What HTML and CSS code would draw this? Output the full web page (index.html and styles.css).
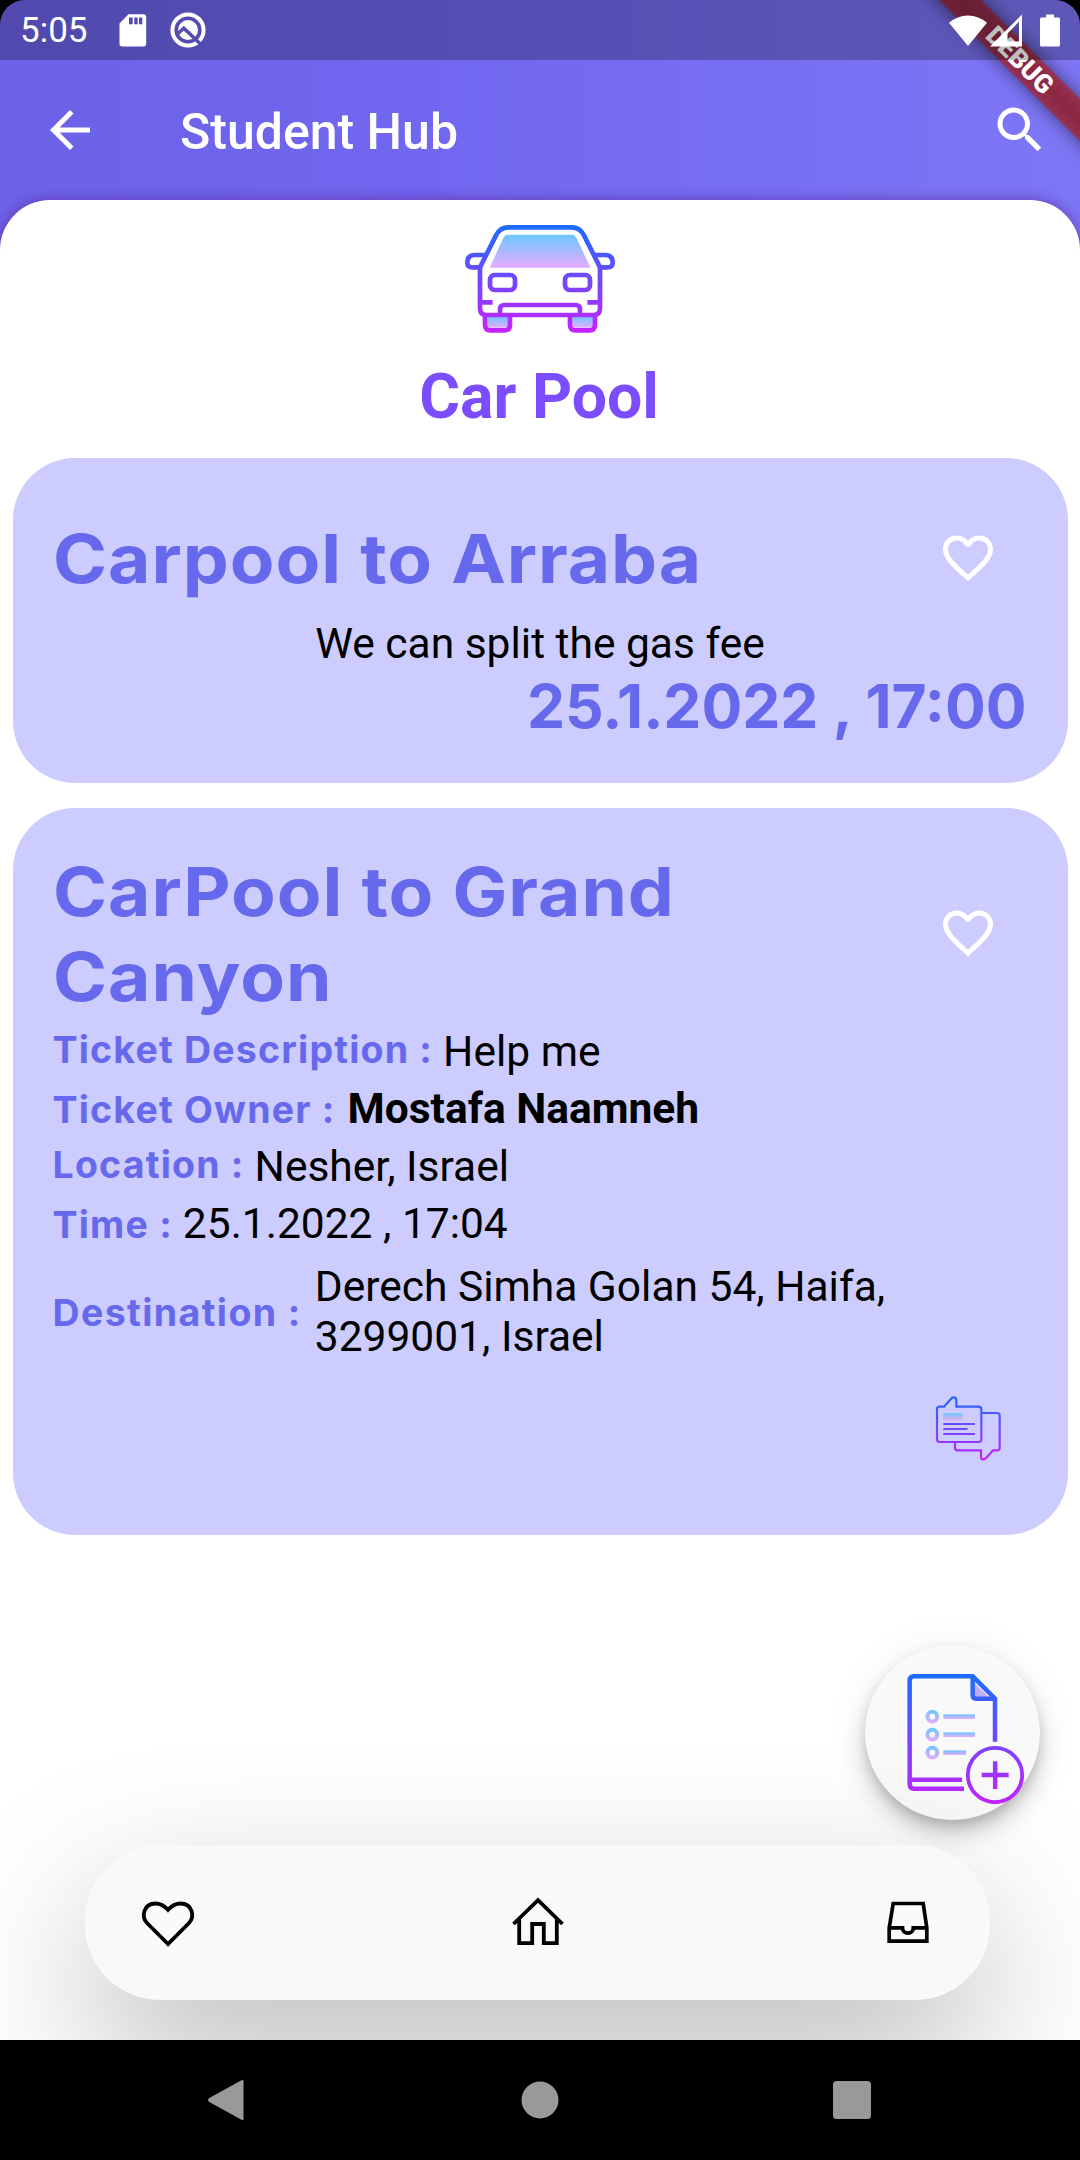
FILE: index.html
```html
<!DOCTYPE html>
<html lang="en">
<head>
<meta charset="utf-8">
<title>Student Hub</title>
<link rel="stylesheet" href="styles.css">
</head>
<body>
<div class="screen">
  <header class="header">
    <div class="appbar">
      <svg class="icon-60" viewBox="0 0 24 24" fill="#fff"><path d="M20 11H7.83l5.59-5.59L12 4l-8 8 8 8 1.41-1.41L7.83 13H20v-2z"/></svg>
      <h1 class="appbar-title">Student Hub</h1>
      <svg class="icon-60" viewBox="0 0 24 24" fill="#fff"><path d="M15.5 14h-.79l-.28-.27C15.41 12.59 16 11.11 16 9.5 16 5.91 13.09 3 9.5 3S3 5.91 3 9.5 5.91 16 9.5 16c1.61 0 3.09-.59 4.23-1.57l.27.28v.79l5 4.99L20.49 19l-4.99-5zm-6 0C7.01 14 5 11.99 5 9.5S7.01 5 9.5 5 14 7.01 14 9.5 11.99 14 9.5 14z"/></svg>
    </div>
    <div class="banner"><span class="banner-text">DEBUG</span></div>
    <div class="status">
      <span class="clock">5:05</span>
      <svg class="sd" width="28" height="33" viewBox="0 0 28 33"><path fill="#fff" fill-rule="evenodd" d="M9.5 .3H24.500a2.700 2.700 0 0 1 2.700 2.700V29.800a2.700 2.700 0 0 1-2.700 2.700H3.200A2.700 2.700 0 0 1 .5 29.800V9.500ZM10 3.400V10.300H13.700V3.400ZM15.300 3.400V10.300H18.700V3.400ZM20 3.400V10.300H23.300V3.400Z"/></svg>
      <svg class="ring" width="36" height="36" viewBox="0 0 36 36"><circle cx="18" cy="18" r="15.600" fill="none" stroke="#fff" stroke-width="4"/><circle cx="18" cy="18" r="10" fill="#fff"/><path d="M7.500 22 13.800 16.200 30.500 32" fill="none" stroke="#544db0" stroke-width="3.400"/></svg>
      <span class="spacer"></span>
      <svg width="38" height="33" viewBox="0 0 38 33"><path fill="#fff" d="M0 8.700A29 29 0 0 1 38 8.700L19 32Z"/></svg>
      <svg class="signal" width="32" height="33" viewBox="0 0 32 33"><path fill="#fff" fill-rule="evenodd" d="M0 32.500 32 .5V32.500ZM17.500 19.500V27.500H29V7.600Z"/></svg>
      <svg class="battery" width="20" height="33" viewBox="0 0 20 33"><path fill="#fff" d="M6 .5H14V3.500H18.500Q20 3.500 20 5V31Q20 32.500 18.500 32.500H1.500Q0 32.500 0 31V5Q0 3.500 1.500 3.500H6Z"/></svg>
    </div>
  </header>

  <main class="sheet">
    <svg class="car" viewBox="255 15 450 450" fill="none">
      <defs>
        <linearGradient id="carLine" gradientUnits="userSpaceOnUse" x1="0" y1="72" x2="0" y2="400"><stop offset="0" stop-color="#1a6dff"/><stop offset="1" stop-color="#c822ff"/></linearGradient>
        <linearGradient id="soft" x1="0" y1="0" x2="0" y2="1"><stop offset="0" stop-color="#6dc7ff"/><stop offset="1" stop-color="#e6abff"/></linearGradient>
      </defs>
      <path fill="url(#soft)" d="M382 104H577Q585 104 588 112L632 203H329L371 112Q375 104 382 104Z"/>
      <path fill="url(#soft)" d="M322 350H384V383H322ZM577 350H639V383H577Z"/>
      <g stroke="url(#carLine)" stroke-width="14">
        <path d="M318 165H285Q262 165 262 188Q262 202 278 202H300V325Q300 345 318 345H642Q660 345 660 325V202H682Q698 202 698 188Q698 165 675 165H642"/>
        <path d="M300 202 348 106Q360 82 385 82H575Q600 82 612 106L660 202"/>
        <rect x="330" y="225" width="75" height="45" rx="14"/>
        <rect x="555" y="225" width="75" height="45" rx="14"/>
        <path d="M303 307.200 338 307M622 307 657 307.200"/>
        <path d="M360 345V328Q360 315 373 315H587Q600 315 600 328V345"/>
        <path d="M315 345V374Q315 391 332 391H373Q390 391 390 374V345M570 345V374Q570 391 587 391H628Q645 391 645 374V345"/>
      </g>
    </svg>
    <h2 class="page-title">Car Pool</h2>

    <article class="card card-short">
      <div class="card-head">
        <h3 class="card-title">Carpool to Arraba</h3>
        <svg class="icon-60" viewBox="0 0 24 24" fill="#fff"><path d="M16.5 3c-1.740 0-3.410.810-4.500 2.090C10.910 3.810 9.240 3 7.500 3 4.420 3 2 5.420 2 8.500c0 3.780 3.400 6.860 8.550 11.540L12 21.350l1.450-1.320C18.600 15.360 22 12.280 22 8.500 22 5.420 19.580 3 16.500 3zm-4.400 15.550l-.1.100-.1-.1C7.140 14.240 4 11.390 4 8.500 4 6.500 5.500 5 7.500 5c1.540 0 3.040.990 3.570 2.360h1.870C13.460 5.990 14.960 5 16.500 5c2 0 3.500 1.500 3.500 3.500 0 2.890-3.140 5.740-7.900 10.050z"/></svg>
      </div>
      <p class="note">We can split the gas fee</p>
      <p class="when">25.1.2022 , 17:00</p>
    </article>

    <article class="card card-full">
      <div class="card-head">
        <h3 class="card-title">CarPool to Grand Canyon</h3>
        <svg class="icon-60" viewBox="0 0 24 24" fill="#fff"><path d="M16.5 3c-1.740 0-3.410.810-4.500 2.090C10.910 3.810 9.240 3 7.500 3 4.420 3 2 5.420 2 8.500c0 3.780 3.400 6.860 8.550 11.540L12 21.350l1.450-1.320C18.600 15.360 22 12.280 22 8.500 22 5.420 19.580 3 16.500 3zm-4.400 15.550l-.1.100-.1-.1C7.140 14.240 4 11.390 4 8.500 4 6.500 5.500 5 7.500 5c1.540 0 3.040.990 3.570 2.360h1.870C13.460 5.990 14.960 5 16.500 5c2 0 3.500 1.500 3.500 3.500 0 2.890-3.140 5.740-7.900 10.050z"/></svg>
      </div>
      <dl class="details">
        <div class="row row-top"><dt>Ticket Description :</dt><dd>Help me</dd></div>
        <div class="row"><dt>Ticket Owner :</dt><dd class="strong">Mostafa Naamneh</dd></div>
        <div class="row row-top"><dt>Location :</dt><dd>Nesher, Israel</dd></div>
        <div class="row"><dt>Time :</dt><dd>25.1.2022 , 17:04</dd></div>
        <div class="row row-tall"><dt>Destination :</dt><dd>Derech Simha Golan 54, Haifa, 3299001, Israel</dd></div>
      </dl>
      <svg class="chat" viewBox="222 165 201 201" fill="none">
        <defs><linearGradient id="chatLine" gradientUnits="userSpaceOnUse" x1="0" y1="168" x2="0" y2="362"><stop offset="0" stop-color="#1a6dff"/><stop offset="1" stop-color="#c822ff"/></linearGradient></defs>
        <rect x="247" y="219" width="57" height="23" fill="url(#soft)"/>
        <g stroke="url(#chatLine)" stroke-width="6.500">
          <path d="M249 200H236Q228 200 228 208V298Q228 306 236 306H353Q361 306 361 298V208Q361 200 353 200H286V180Q286 172 278 172Q273 172 269 178Z"/>
          <path d="M361 219H408Q416 219 416 227V323Q416 331 408 331H396L376 353Q371 358 366 358Q360 358 360 350V331H290Q282 331 282 323V306"/>
          <path d="M247 252H342M247 267H319.500M247 282H342"/>
        </g>
      </svg>
    </article>

    <button class="fab" aria-label="New ticket">
      <svg width="134" height="134" viewBox="162 150 402 402" fill="none">
        <defs><linearGradient id="docLine" gradientUnits="userSpaceOnUse" x1="0" y1="162" x2="0" y2="552"><stop offset="0" stop-color="#1a6dff"/><stop offset="1" stop-color="#c822ff"/></linearGradient>
        <linearGradient id="dots" gradientUnits="userSpaceOnUse" x1="0" y1="270" x2="0" y2="310"><stop offset="0" stop-color="#6dc7ff"/><stop offset="1" stop-color="#e6abff"/></linearGradient></defs>
        <path fill="#c3aefa" d="M400 185 450 235H400Z"/>
        <g stroke="url(#docLine)" stroke-width="13.500">
          <path d="M465 365V236L398 169H222Q209 169 209 182V492Q209 506 222 506H372M209 479H366"/>
          <path d="M398 170V225Q398 236 409 236H465"/>
          <circle cx="465" cy="465" r="81.500" stroke-width="11.500"/>
          <path d="M425 465H506M465.500 424V507"/>
        </g>
        <g><circle cx="277" cy="290" r="14.500" stroke="url(#dots)" stroke-width="12"/><rect x="310" y="283" width="95" height="14" fill="url(#soft)"/></g>
        <g transform="translate(0 54)"><circle cx="277" cy="290" r="14.500" stroke="url(#dots)" stroke-width="12"/><rect x="310" y="283" width="95" height="14" fill="url(#soft)"/></g>
        <g transform="translate(0 108)"><circle cx="277" cy="290" r="14.500" stroke="url(#dots)" stroke-width="12"/><rect x="310" y="283" width="68" height="14" fill="url(#soft)"/></g>
      </svg>
    </button>

    <nav class="tabs">
      <svg class="icon-60" viewBox="0 0 60 60" fill="none" stroke="#000" stroke-width="3.800"><path d="M30 51 9 30C3 23.500 5.500 10.500 17.500 10.500 23.500 10.500 27.500 14 30 16.800 32.500 14 36.500 10.500 42.500 10.500 54.500 10.500 57 23.500 51 30Z"/></svg>
      <svg class="icon-60" viewBox="0 0 60 60" fill="none" stroke="#000" stroke-width="3.800"><path d="M5.500 31 30 7.200 54.500 31M11.200 26V50.200H24.200V31H35.800V50.200H48.800V26"/></svg>
      <svg class="icon-60" viewBox="0 0 60 60" fill="none" stroke="#000" stroke-width="3.700"><path d="M15.200 10.500H45.200L48.800 34.800V48.200H11.200V34.800ZM11.200 34.800H24.500A5.400 5.400 0 0 0 35.300 34.800H48.800"/></svg>
    </nav>
  </main>

  <footer class="system-nav">
    <svg width="40" height="42" viewBox="0 0 40 42" fill="#999"><path d="M34.500 1.300Q36.500 .200 36.500 2.500V39.500Q36.500 41.800 34.500 40.700L1.800 22.800Q0 21 1.800 19.200Z"/></svg>
    <svg width="38" height="38" viewBox="0 0 38 38" fill="#999"><circle cx="19" cy="19" r="18.500"/></svg>
    <svg width="38" height="38" viewBox="0 0 38 38" fill="#999"><rect width="38" height="38" rx="3.500"/></svg>
  </footer>
</div>
</body>
</html>
```
FILE: styles.css
```css
* { box-sizing: border-box; margin: 0; padding: 0; }

body {
  width: 1080px;
  height: 2160px;
  background: #000;
  font-family: Roboto, sans-serif;
  color: #000;
}

svg { display: block; flex: none; }

.screen {
  width: 1080px;
  height: 2160px;
  display: flex;
  flex-direction: column;
  overflow: hidden;
}

.icon-60 { width: 60px; height: 60px; }

/* header */
.header {
  position: relative;
  height: 260px;
  margin-bottom: -60px;
  padding-top: 60px;
  border-radius: 25px 25px 0 0;
  overflow: hidden;
  background: linear-gradient(90deg, #6c62e8 0%, #7167f0 40%, #7d76f5 100%);
}

.appbar {
  height: 140px;
  display: flex;
  align-items: center;
  padding: 0 30px 0 40px;
}

.appbar-title {
  flex: 1;
  padding: 3px 0 0 80px;
  font-size: 50px;
  font-weight: 500;
  line-height: 60px;
  color: #fff;
}

.status {
  position: absolute;
  inset: 0 0 auto 0;
  height: 60px;
  display: flex;
  align-items: center;
  padding: 0 20px;
  background: rgba(0, 0, 0, .25);
}

.clock { padding-top: 2px; font-size: 35px; line-height: 60px; color: #fff; }
.sd { margin-left: 31px; }
.ring { margin-left: 23px; }
.spacer { flex: 1; }
.signal { margin-left: 3px; }
.battery { margin-left: 18px; }

.banner {
  position: absolute;
  top: 45px;
  left: 880px;
  width: 280px;
  height: 30px;
  transform: rotate(45deg);
  text-align: center;
}

.banner::before,
.banner::after {
  content: "";
  position: absolute;
  inset: 0;
}

.banner::before { background: rgba(0, 0, 0, .5); filter: blur(9px); }
.banner::after { background: rgba(183, 28, 28, .63); }

.banner-text {
  position: relative;
  z-index: 1;
  display: block;
  font-size: 26px;
  font-weight: 900;
  line-height: 30px;
  color: #fff;
}

/* content sheet */
.sheet {
  position: relative;
  flex: 1;
  display: flex;
  flex-direction: column;
  padding: 5px 12.5px 40px 12.5px;
  border-radius: 50px 50px 0 0;
  background: #fff;
  box-shadow: 0 0 13px rgba(94, 40, 160, .75);
  clip-path: inset(-30px 0 0 0);
}

.car { width: 150px; height: 150px; align-self: center; }

.page-title {
  margin-top: 5px;
  height: 98px;
  padding-right: 2px;
  font-size: 62.5px;
  line-height: 74px;
  font-weight: 700;
  text-align: center;
  color: #7c4dff;
}

.card {
  display: flex;
  flex-direction: column;
  padding: 0 40px;
  border-radius: 62px;
  background: #ccf;
}

.card-short { height: 325px; padding-top: 57px; }
.card-full { height: 727px; margin-top: 25px; padding-top: 39.5px; }

.card-head {
  display: flex;
  align-items: center;
  justify-content: space-between;
  padding-right: 30px;
}

.card-title {
  max-width: 760px;
  padding-top: 1px;
  font-family: Inter, sans-serif;
  font-size: 67.5px;
  line-height: 85px;
  font-weight: 700;
  letter-spacing: .9px;
  color: #6769ec;
  transform: scaleX(1.082);
  transform-origin: 0 50%;
}

.note { margin-top: 18px; font-size: 42.5px; line-height: 50px; text-align: center; }

.when {
  margin-top: -1px;
  padding-right: 1px;
  font-family: Inter, sans-serif;
  font-size: 60.5px;
  line-height: 76px;
  font-weight: 700;
  text-align: right;
  color: #6769ec;
}

.details { display: flex; flex-direction: column; gap: 7.5px; margin-top: 7.5px; }

.row { display: flex; align-items: baseline; gap: 10px; }
.row-top { position: relative; top: 1px; align-items: flex-start; }
.row-tall { align-items: center; margin-top: 6px; gap: 13px; }

.row dt {
  flex: none;
  font-family: Inter, sans-serif;
  font-size: 37.5px;
  line-height: 45.7px;
  font-weight: 700;
  letter-spacing: 1.2px;
  color: #6769ec;
}

.row-tall dt { padding-top: 1px; letter-spacing: 1.4px; }
.row dd { font-size: 42.5px; line-height: 50px; }
.row dd.strong { padding-left: 2px; font-weight: 700; }
.row-tall dd { max-width: 640px; }

.chat { width: 67px; height: 67px; margin: 33px 26px 0 0; align-self: flex-end; }

.fab {
  display: flex;
  align-self: flex-end;
  width: 175px;
  height: 175px;
  margin: 110px 27.5px 0 0;
  padding: 25px 0 0 29px;
  border: 0;
  border-radius: 50%;
  background: #f9f9f9;
  box-shadow: 0 7.5px 12.5px -2.5px rgba(0, 0, 0, .2), 0 15px 25px rgba(0, 0, 0, .14), 0 2.5px 45px rgba(0, 0, 0, .07);
}

.tabs {
  position: relative;
  isolation: isolate;
  display: flex;
  align-items: center;
  justify-content: space-between;
  width: 905px;
  height: 155px;
  margin: 25px 0 0 72.5px;
  padding: 0 52.5px;
}

/* wide soft shadow below, pill surface above it */
.tabs::before,
.tabs::after {
  content: "";
  position: absolute;
  inset: 0;
  border-radius: 75px;
}

.tabs::before {
  z-index: -2;
  background: rgba(0, 0, 0, .27);
  transform: translateY(60px);
  filter: blur(75px);
}

.tabs::after { z-index: -1; background: #f9f9f9; }

/* system navigation */
.system-nav {
  position: relative;
  height: 120px;
  display: flex;
  align-items: center;
  justify-content: space-between;
  padding: 0 209px 0 207px;
  background: #000;
}
```
